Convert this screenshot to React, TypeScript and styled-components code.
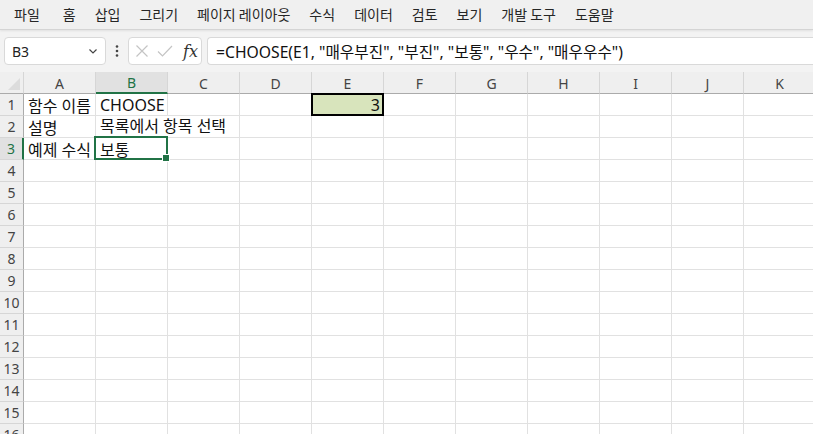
import React from "react";
import styled, { createGlobalStyle } from "styled-components";

const GlobalStyle = createGlobalStyle`
  html, body { margin: 0; padding: 0; background: #f3f3f3; overflow: hidden; }
  body { font-family: "Noto Sans", "Noto Sans CJK KR", sans-serif; }
`;

const GREEN = "#217346";
const COLS = ["A", "B", "C", "D", "E", "F", "G", "H", "I", "J", "K"];
const ROWS = Array.from({ length: 16 }, (_, i) => i + 1);
const MENU = ["파일", "홈", "삽입", "그리기", "페이지 레이아웃", "수식", "데이터", "검토", "보기", "개발 도구", "도움말"];

const cells: Record<string, string> = {
  A1: "함수 이름",
  B1: "CHOOSE",
  A2: "설명",
  B2: "목록에서 항목 선택",
  A3: "예제 수식",
  B3: "보통",
  E1: "3",
};

const Page = styled.div`
  width: 813px;
  height: 434px;
  display: flex;
  flex-direction: column;
  overflow: hidden;
  background: #f3f3f3;
`;

const MenuBar = styled.div`
  height: 29px;
  display: flex;
  align-items: center;
  padding-left: 14px;
  gap: 19px;
  font-family: "Noto Sans CJK KR", sans-serif;
  font-size: 14px;
  color: #262626;
  background: #f0f0f0;
  border-bottom: 1px solid #d4d4d4;
  box-shadow: 0 1px 2px rgba(0, 0, 0, 0.08);
  flex-shrink: 0;
`;

const MenuItem = styled.span<{ $first?: boolean }>`
  white-space: nowrap;
  padding-bottom: 2px;
  margin-right: ${(p) => (p.$first ? "4px" : "0")};
`;

const FormulaRow = styled.div`
  height: 28px;
  margin-top: 7px;
  display: flex;
  align-items: stretch;
  padding-left: 4px;
  flex-shrink: 0;
`;

const Box = styled.div<{ $w?: number; $grow?: boolean }>`
  background: #fff;
  border: 1px solid #d9d9d9;
  border-radius: 4px;
  box-sizing: border-box;
  display: flex;
  align-items: center;
  ${(p) => (p.$w ? `width: ${p.$w}px;` : "")}
  ${(p) => (p.$grow ? "flex: 1; margin-left: 5px; border-right: none; border-radius: 4px 0 0 4px;" : "")}
`;

const NameText = styled.span`
  flex: 1;
  padding-left: 7px;
  font-size: 14px;
  color: #222;
`;

const Dots = styled.div`
  width: 22px;
  display: flex;
  align-items: center;
  justify-content: center;
`;

const FxIcons = styled.div`
  display: flex;
  align-items: center;
  gap: 8px;
  padding-left: 6px;
`;

const Fx = styled.span`
  font-family: "DejaVu Serif", "Liberation Serif", serif;
  font-style: italic;
  font-size: 16px;
  color: #333;
  margin-left: 2px;
`;

const FormulaText = styled.span`
  padding-left: 8px;
  font-family: "Noto Sans", "Noto Sans CJK KR", sans-serif;
  font-size: 15.7px;
  color: #111;
  white-space: nowrap;
`;

const Sheet = styled.div`
  margin-top: 7px;
  display: grid;
  grid-template-columns: 24px repeat(11, 72px);
  grid-template-rows: 22px repeat(16, 22px);
  background: #fff;
  flex-shrink: 0;
`;

const Corner = styled.div`
  background: #efefef;
  border-bottom: 1px solid #ababab;
  border-right: 1px solid #d6d6d6;
  box-sizing: border-box;
  position: relative;
  &::after {
    content: "";
    position: absolute;
    right: 3px;
    bottom: 3px;
    border-left: 12px solid transparent;
    border-bottom: 12px solid #dcdcdc;
  }
`;

const ColHead = styled.div<{ $active?: boolean }>`
  background: ${(p) => (p.$active ? "#e1e1e1" : "#efefef")};
  color: ${(p) => (p.$active ? GREEN : "#444")};
  border-right: 1px solid #d6d6d6;
  border-bottom: ${(p) => (p.$active ? `2px solid ${GREEN}` : "1px solid #ababab")};
  box-sizing: border-box;
  display: flex;
  align-items: center;
  justify-content: center;
  font-size: 14px;
  padding-top: 1px;
`;

const RowHead = styled.div<{ $active?: boolean }>`
  background: ${(p) => (p.$active ? "#e1e1e1" : "#efefef")};
  color: ${(p) => (p.$active ? GREEN : "#444")};
  border-right: ${(p) => (p.$active ? `2px solid ${GREEN}` : "1px solid #ababab")};
  border-bottom: 1px solid #d6d6d6;
  box-sizing: border-box;
  display: flex;
  align-items: center;
  justify-content: center;
  font-size: 14px;
`;

const Cell = styled.div<{ $right?: boolean; $fill?: string }>`
  border-right: 1px solid #e1e1e1;
  border-bottom: 1px solid #e1e1e1;
  box-sizing: border-box;
  background: ${(p) => p.$fill || "transparent"};
  display: flex;
  align-items: center;
  justify-content: ${(p) => (p.$right ? "flex-end" : "flex-start")};
  padding: 0 3px 0 4px;
  font-family: "Noto Sans", "Noto Sans CJK KR", sans-serif;
  font-size: 16px;
  color: #111;
  white-space: nowrap;
  overflow: visible;
  position: relative;
  min-width: 0;
`;

const CellText = styled.span<{ $spill?: boolean }>`
  position: relative;
  z-index: ${(p) => (p.$spill ? 2 : "auto")};
  ${(p) => (p.$spill ? "background: #fff; line-height: 21px;" : "")}
`;

const StyleBorder = styled.div`
  position: absolute;
  left: -1px;
  top: -1px;
  right: -1px;
  bottom: -1px;
  border: 2px solid #000;
  pointer-events: none;
`;

const Selection = styled.div`
  position: absolute;
  left: -2px;
  top: -2px;
  right: -1px;
  bottom: -1px;
  border: 2px solid ${GREEN};
  pointer-events: none;
  z-index: 3;
  &::after {
    content: "";
    position: absolute;
    right: -4px;
    bottom: -4px;
    width: 6px;
    height: 6px;
    background: ${GREEN};
    border: 1px solid #fff;
  }
`;

function Chevron() {
  return (
    <svg width="12" height="12" viewBox="0 0 12 12" style={{ marginRight: 6 }}>
      <path d="M2.5 4.5 L6 8 L9.5 4.5" fill="none" stroke="#444" strokeWidth="1.2" />
    </svg>
  );
}

export default function App() {
  return (
    <Page>
      <GlobalStyle />
      <MenuBar>
        {MENU.map((m, i) => (
          <MenuItem key={m} $first={i === 0}>
            {m}
          </MenuItem>
        ))}
      </MenuBar>
      <FormulaRow>
        <Box $w={102}>
          <NameText>B3</NameText>
          <Chevron />
        </Box>
        <Dots>
          <svg width="4" height="14" viewBox="0 0 4 14">
            <circle cx="2" cy="2.5" r="1.3" fill="#444" />
            <circle cx="2" cy="7" r="1.3" fill="#444" />
            <circle cx="2" cy="11.5" r="1.3" fill="#444" />
          </svg>
        </Dots>
        <Box $w={74}>
          <FxIcons>
            <svg width="14" height="14" viewBox="0 0 14 14">
              <path d="M1.5 1.5 L12.5 12.5 M12.5 1.5 L1.5 12.5" stroke="#c4c4c4" strokeWidth="1.2" />
            </svg>
            <svg width="16" height="14" viewBox="0 0 16 14">
              <path d="M1 7.5 L5.5 12 L15 2" fill="none" stroke="#c4c4c4" strokeWidth="1.2" />
            </svg>
            <Fx>fx</Fx>
          </FxIcons>
        </Box>
        <Box $grow>
          <FormulaText>=CHOOSE(E1, "매우부진", "부진", "보통", "우수", "매우우수")</FormulaText>
        </Box>
      </FormulaRow>
      <Sheet>
        <Corner />
        {COLS.map((c) => (
          <ColHead key={c} $active={c === "B"}>
            {c}
          </ColHead>
        ))}
        {ROWS.map((r) => (
          <React.Fragment key={r}>
            <RowHead $active={r === 3}>{r}</RowHead>
            {COLS.map((c) => {
              const id = `${c}${r}`;
              const isE1 = id === "E1";
              return (
                <Cell key={id} $right={isE1} $fill={isE1 ? "#d8e4bc" : undefined}>
                  {cells[id] && <CellText $spill={id === "B2"}>{cells[id]}</CellText>}
                  {isE1 && <StyleBorder />}
                  {id === "B3" && <Selection />}
                </Cell>
              );
            })}
          </React.Fragment>
        ))}
      </Sheet>
    </Page>
  );
}
